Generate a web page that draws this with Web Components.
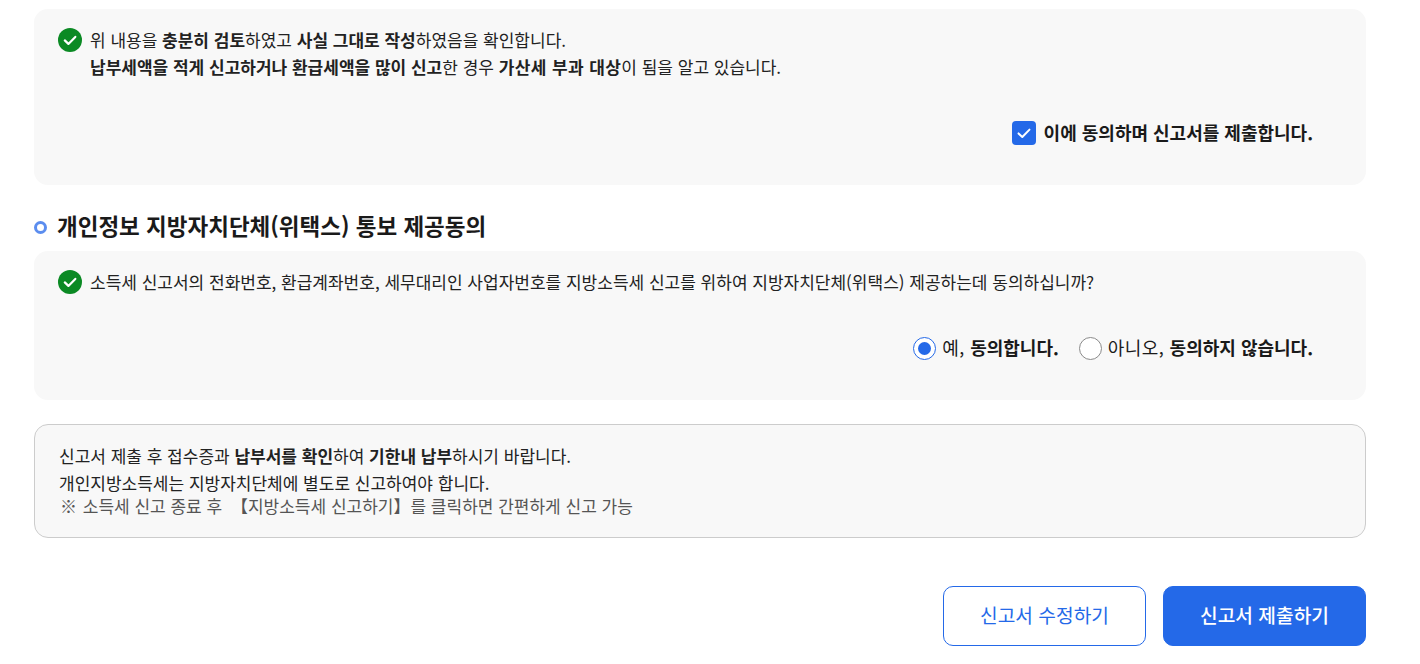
<!DOCTYPE html>
<html lang="ko">
<head>
<meta charset="utf-8">
<title>신고서 제출</title>
<style>
  html, body { margin: 0; background: #fff; }
  body {
    font-family: "Noto Sans CJK KR", "Noto Sans", sans-serif;
    color: #222;
    font-size: 17px;
  }
  b { font-weight: 700; letter-spacing: 0; }
  .page { display: flex; flex-direction: column; padding: 9px 54px 18px 34px; }
</style>
</head>
<body>
<div class="page">
  <consent-card>
    <div>위 내용을 <b>충분히 검토</b>하였고 <b>사실 그대로 작성</b>하였음을 확인합니다.</div>
    <div><b>납부세액을 적게 신고하거나 환급세액을 많이 신고</b>한 경우 <b style="letter-spacing:.4px">가산세 부과 대상</b>이 됨을 알고 있습니다.</div>
    <check-box slot="actions"><b>이에 동의하며 신고서를 제출합니다.</b></check-box>
  </consent-card>

  <section-title>개인정보 지방자치단체(위택스) 통보 제공동의</section-title>

  <consent-card>
    <div>소득세 신고서의 전화번호, 환급계좌번호, 세무대리인 사업자번호를 지방소득세 신고를 위하여 지방자치단체(위택스) 제공하는데 동의하십니까?</div>
    <radio-box slot="actions" checked>예, <b>동의합니다.</b></radio-box>
    <radio-box slot="actions">아니오, <b>동의하지 않습니다.</b></radio-box>
  </consent-card>

  <notice-box>
    <div>신고서 제출 후 접수증과 <b>납부서를 확인</b>하여 <b>기한내 납부</b>하시기 바랍니다.</div>
    <div>개인지방소득세는 지방자치단체에 별도로 신고하여야 합니다.</div>
    <div style="color:#555;line-height:20px;padding-left:1px"><span style="margin-right:1px">※</span> 소득세 신고 종료 후 <span style="margin-left:4px">【지방소득세 신고하기】를</span> 클릭하면 간편하게 신고 가능</div>
  </notice-box>

  <action-bar>
    <app-button variant="outline">신고서 수정하기</app-button>
    <app-button variant="solid">신고서 제출하기</app-button>
  </action-bar>
</div>

<script>
class ConsentCard extends HTMLElement {
  constructor() {
    super();
    this._root = this.attachShadow({mode: 'open'});
    this._root.innerHTML = `
      <style>
        :host { display: block; background: #f8f8f8; border-radius: 14px; }
        .card { padding: 18px 53px 40px 24px; }
        .top { display: flex; gap: 8px; }
        .top svg { flex: none; width: 24px; height: 24px; margin-top: 1px; }
        .body { line-height: 27px; margin-top: -1px; margin-bottom: 1px; }
        .actions { display: flex; justify-content: flex-end; gap: 20px; margin-top: 38px; }
      </style>
      <div class="card">
        <div class="top">
          <svg viewBox="0 0 24 24">
            <circle cx="12" cy="12" r="12" fill="#0b8a24"/>
            <path d="M6.8 12.4l3.6 3.5 6.9-7" fill="none" stroke="#fff" stroke-width="2.2" stroke-linecap="round" stroke-linejoin="round"/>
          </svg>
          <div class="body"><slot></slot></div>
        </div>
        <div class="actions"><slot name="actions"></slot></div>
      </div>
    `;
  }
}

class SectionTitle extends HTMLElement {
  constructor() {
    super();
    this._root = this.attachShadow({mode: 'open'});
    this._root.innerHTML = `
      <style>
        :host { display: flex; align-items: center; gap: 10px; box-sizing: border-box; height: 66px; padding-top: 19px; padding-bottom: 5px; }
        i { width: 13px; height: 13px; margin-top: 4px; box-sizing: border-box; border: 3.5px solid #5b8def; border-radius: 50%; background: #fff; flex: none; }
        h2 { margin: 0; font-size: 22.5px; font-weight: 700; color: #1a1a1a; line-height: 30px; }
      </style>
      <i></i><h2><slot></slot></h2>
    `;
  }
}

class CheckBox extends HTMLElement {
  constructor() {
    super();
    this._root = this.attachShadow({mode: 'open'});
    this._root.innerHTML = `
      <style>
        :host { display: inline-flex; align-items: center; gap: 8px; font-size: 18px; line-height: 26px; color: #1a1a1a; letter-spacing: .05px; }
        span { width: 24px; height: 24px; margin-top: 2px; border-radius: 4px; background: #2469e8; display: flex; align-items: center; justify-content: center; }
      </style>
      <span><svg width="16" height="16" viewBox="0 0 16 16"><path d="M2.5 8.4l3.8 3.6 7.2-7.4" fill="none" stroke="#fff" stroke-width="2" stroke-linecap="round" stroke-linejoin="round"/></svg></span>
      <div><slot></slot></div>
    `;
  }
}

class RadioBox extends HTMLElement {
  constructor() {
    super();
    this._root = this.attachShadow({mode: 'open'});
  }

  connectedCallback() {
    const checked = this.hasAttribute("checked");
    this._root.innerHTML = `
      <style>
        :host { display: inline-flex; align-items: center; gap: 6px; font-size: 18px; line-height: 26px; color: #1a1a1a; letter-spacing: .4px; }
        i { width: 23px; height: 23px; margin-top: 2px; box-sizing: border-box; border-radius: 50%; background: #fff; display: flex; align-items: center; justify-content: center; border: 1px solid ${checked ? "#2469e8" : "#8a8a8a"}; }
        i::after { content: ""; width: 13px; height: 13px; border-radius: 50%; background: ${checked ? "#2469e8" : "transparent"}; }
      </style>
      <i></i><div><slot></slot></div>
    `;
  }
}

class NoticeBox extends HTMLElement {
  constructor() {
    super();
    this._root = this.attachShadow({mode: 'open'});
    this._root.innerHTML = `
      <style>
        :host { display: block; margin-top: 24px; box-sizing: border-box; height: 114px; padding: 17px 24px; background: #f8f8f8; border: 1px solid #ccc; border-radius: 14px; line-height: 27px; }
      </style>
      <slot></slot>
    `;
  }
}

class ActionBar extends HTMLElement {
  constructor() {
    super();
    this._root = this.attachShadow({mode: 'open'});
    this._root.innerHTML = `
      <style>
        :host { display: flex; justify-content: flex-end; gap: 17px; margin-top: 48px; }
      </style>
      <slot></slot>
    `;
  }
}

class AppButton extends HTMLElement {
  constructor() {
    super();
    this._root = this.attachShadow({mode: 'open'});
  }

  connectedCallback() {
    const solid = this.getAttribute("variant") === "solid";
    this._root.innerHTML = `
      <style>
        :host { display: block; }
        button {
          width: 203px; height: 60px; border-radius: 10px; box-sizing: border-box; padding: 0 0 2px;
          font: inherit; font-size: 19.2px; font-weight: ${solid ? 500 : 400};
          border: 1px solid #2469e8;
          background: ${solid ? "#2469e8" : "#fff"};
          color: ${solid ? "#fff" : "#2469e8"};
        }
      </style>
      <button type="button"><slot></slot></button>
    `;
  }
}

window.customElements.define("consent-card", ConsentCard);
window.customElements.define("section-title", SectionTitle);
window.customElements.define("check-box", CheckBox);
window.customElements.define("radio-box", RadioBox);
window.customElements.define("notice-box", NoticeBox);
window.customElements.define("action-bar", ActionBar);
window.customElements.define("app-button", AppButton);
</script>
</body>
</html>
